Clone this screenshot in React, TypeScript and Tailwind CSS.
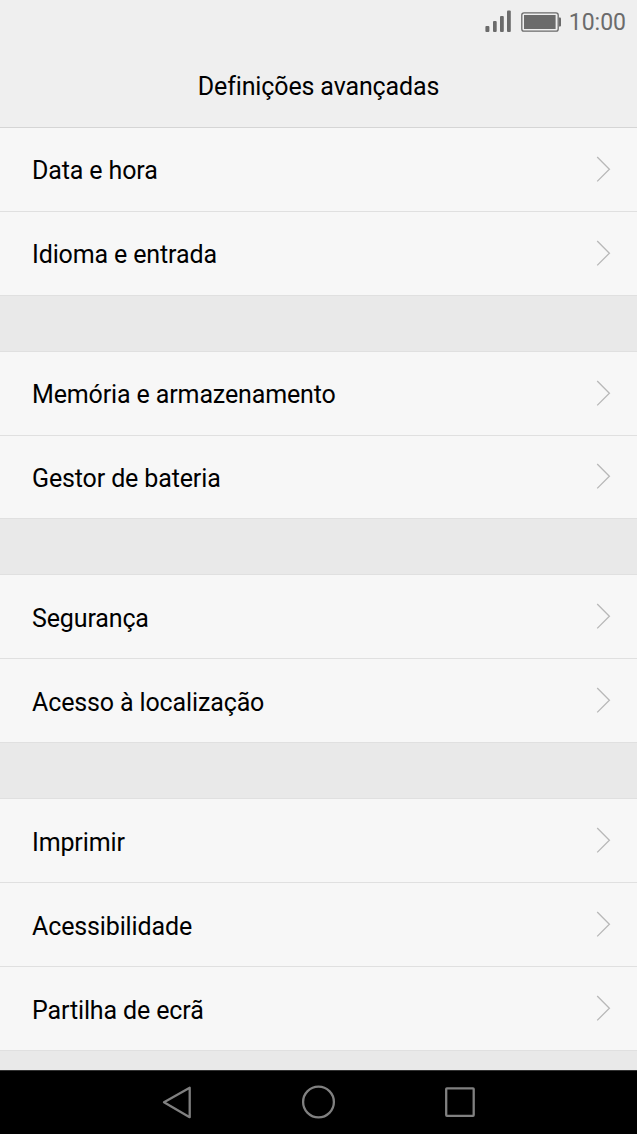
import React from 'react'

const groups = [
  ['Data e hora', 'Idioma e entrada'],
  ['Memória e armazenamento', 'Gestor de bateria'],
  ['Segurança', 'Acesso à localização'],
  ['Imprimir', 'Acessibilidade', 'Partilha de ecrã'],
]

const Chevron = () => (
  <svg width="16" height="28" viewBox="0 0 16 28" fill="none" className="mb-[2px]">
    <path d="M1.2 2L13.4 14.2L1.2 26.4" stroke="#b8b8b8" strokeWidth="1.3" />
  </svg>
)

const StatusBar = () => (
  <div className="flex h-11 shrink-0 items-center justify-end pr-[11px] text-[#6b6b6b]">
    <svg width="76" height="24" viewBox="0 0 76 24" fill="none" className="mr-2">
      <g fill="#6b6b6b">
        <rect x="0.4" y="16" width="4" height="6" rx="1" />
        <rect x="8" y="11" width="3.7" height="11" rx="1" />
        <rect x="15" y="6" width="3.8" height="16" rx="1" />
        <rect x="22" y="0.6" width="3.8" height="21.4" rx="1" />
        <rect x="39" y="5" width="31.6" height="14" />
        <path d="M74 7.5h1q1 0 1 1v7q0 1-1 1h-1z" />
      </g>
      <rect x="36.8" y="2.8" width="36.4" height="18.4" rx="2.2" stroke="#6b6b6b" strokeWidth="1.3" />
    </svg>
    <span className="pt-[2px] text-[23px] leading-6">10:00</span>
  </div>
)

const NavBar = () => (
  <div className="flex h-16 shrink-0 justify-center border-t border-[#333] bg-black">
    <svg width="315" height="63" viewBox="0 0 315 63" fill="none" stroke="#808080" strokeWidth="2.3" strokeLinejoin="round">
      <path d="M28.7 16.8V46.2L3 31.2Z" />
      <circle cx="157.5" cy="31" r="15.4" />
      <rect x="285.2" y="17.4" width="27.5" height="27.4" rx="0.7" />
    </svg>
  </div>
)

const App = () => {
  return (
    <div className="flex h-[1134px] w-[637px] flex-col overflow-hidden bg-[#e9e9e9] font-['Roboto',sans-serif] text-black">
      <div className="flex h-32 shrink-0 flex-col border-b border-[#d5d5d5] bg-[#efefef]">
        <StatusBar />
        <h1 className="pt-px text-center text-[25px] leading-[84px] tracking-[-0.13px]">Definições avançadas</h1>
      </div>
      <div className="flex-1 overflow-hidden">
        {groups.map((items, index) => (
          <ul key={items[0]} className={index > 0 ? 'mt-[55px] border-t border-[#e0e0e0]' : ''}>
            {items.map((item) => (
              <li
                key={item}
                className={`flex items-center justify-between border-b border-[#e0e0e0] bg-[#f7f7f7] pr-[25px] pl-8 ${item === 'Gestor de bateria' ? 'h-[83px]' : 'h-[84px]'}`}
              >
                <span className={`text-[25px] leading-8 tracking-[-0.13px] ${index > 1 || item === 'Gestor de bateria' ? 'pt-1' : 'pt-[2px]'}`}>{item}</span>
                <Chevron />
              </li>
            ))}
          </ul>
        ))}
      </div>
      <NavBar />
    </div>
  )
}

export default App
